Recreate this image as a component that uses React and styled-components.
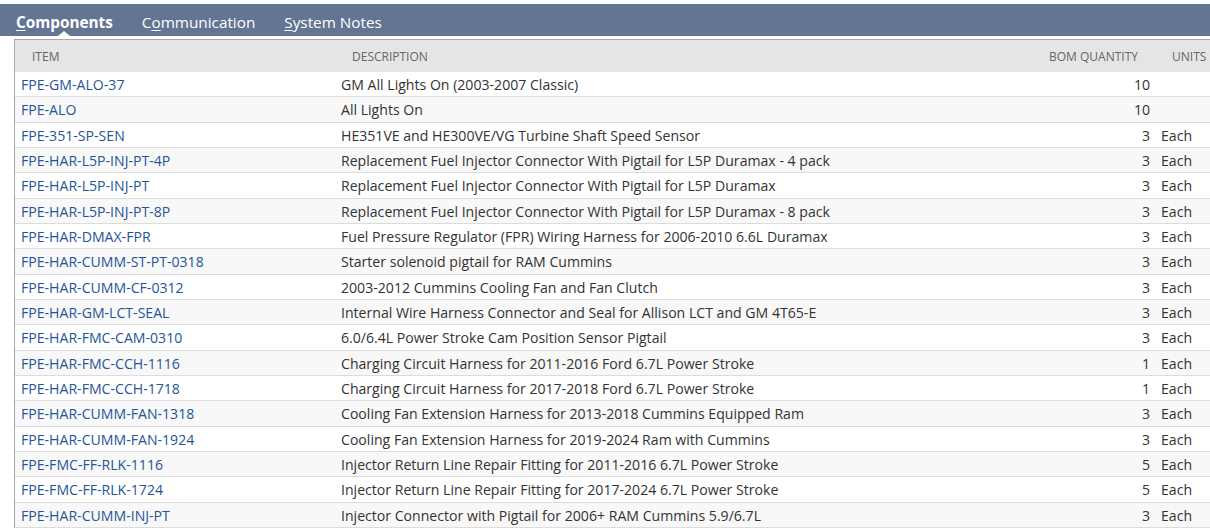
import styled, { createGlobalStyle } from 'styled-components';

const GlobalStyle = createGlobalStyle`
    html, body {
        margin: 0;
        padding: 0;
        background: #ffffff;
        overflow: hidden;
    }
    body {
        font-family: "Open Sans", "Liberation Sans", sans-serif;
    }
`;

const Page = styled.div`
    width: 1210px;
    height: 531px;
    padding-top: 4px;
    box-sizing: border-box;
    overflow: hidden;
`;

const TabBar = styled.div`
    display: flex;
    align-items: stretch;
    height: 32px;
    padding-left: 2px;
    background-color: #637593;
`;

const Tab = styled.div`
    position: relative;
    display: flex;
    align-items: center;
    padding: 3px 14px 0 14px;
    margin-right: 1px;
    color: #ffffff;
    font-size: 15.3px;
    font-weight: ${p => (p.$active ? 700 : 400)};
    white-space: nowrap;

    u {
        text-decoration-thickness: 1px;
        text-underline-offset: 2px;
    }

    &::after {
        content: '';
        display: ${p => (p.$active ? 'block' : 'none')};
        position: absolute;
        left: 50%;
        bottom: 0;
        margin-left: -6px;
        border-left: 6px solid transparent;
        border-right: 6px solid transparent;
        border-bottom: 5px solid #ffffff;
    }
`;

const Table = styled.div`
    margin: 3px 0 0 14px;
    width: 1260px;
    border-left: 1px solid #a9a9a9;
    border-top: 1px solid #a9a9a9;
`;

const Row = styled.div`
    display: grid;
    grid-template-columns: 320px 697px 123px 1fr;
    align-items: center;
    box-sizing: border-box;
    height: ${p => (p.$header ? '32px' : '25.33px')};
    padding-top: ${p => (p.$header ? '0' : '1px')};
    background-color: ${p => (p.$header ? '#e5e5e5' : p.$odd ? '#f8f8f8' : '#ffffff')};
    border-bottom: ${p => (p.$header ? 'none' : '1px solid #dcdcdc')};
`;

const HeadCell = styled.div`
    padding-left: 17px;
    font-size: 12px;
    color: #666666;
    text-transform: uppercase;
    white-space: nowrap;
`;

const Cell = styled.div`
    padding: 0 6px;
    font-size: 14.1px;
    color: #333333;
    white-space: nowrap;
    text-align: ${p => (p.$right ? 'right' : 'left')};
    padding-right: ${p => (p.$right ? '5px' : '6px')};
`;

const ItemLink = styled.a`
    color: #255599;
    text-decoration: none;
`;

const items = [
    ['FPE-GM-ALO-37', 'GM All Lights On (2003-2007 Classic)', '10', ''],
    ['FPE-ALO', 'All Lights On', '10', ''],
    ['FPE-351-SP-SEN', 'HE351VE and HE300VE/VG Turbine Shaft Speed Sensor', '3', 'Each'],
    ['FPE-HAR-L5P-INJ-PT-4P', 'Replacement Fuel Injector Connector With Pigtail for L5P Duramax - 4 pack', '3', 'Each'],
    ['FPE-HAR-L5P-INJ-PT', 'Replacement Fuel Injector Connector With Pigtail for L5P Duramax', '3', 'Each'],
    ['FPE-HAR-L5P-INJ-PT-8P', 'Replacement Fuel Injector Connector With Pigtail for L5P Duramax - 8 pack', '3', 'Each'],
    ['FPE-HAR-DMAX-FPR', 'Fuel Pressure Regulator (FPR) Wiring Harness for 2006-2010 6.6L Duramax', '3', 'Each'],
    ['FPE-HAR-CUMM-ST-PT-0318', 'Starter solenoid pigtail for RAM Cummins', '3', 'Each'],
    ['FPE-HAR-CUMM-CF-0312', '2003-2012 Cummins Cooling Fan and Fan Clutch', '3', 'Each'],
    ['FPE-HAR-GM-LCT-SEAL', 'Internal Wire Harness Connector and Seal for Allison LCT and GM 4T65-E', '3', 'Each'],
    ['FPE-HAR-FMC-CAM-0310', '6.0/6.4L Power Stroke Cam Position Sensor Pigtail', '3', 'Each'],
    ['FPE-HAR-FMC-CCH-1116', 'Charging Circuit Harness for 2011-2016 Ford 6.7L Power Stroke', '1', 'Each'],
    ['FPE-HAR-FMC-CCH-1718', 'Charging Circuit Harness for 2017-2018 Ford 6.7L Power Stroke', '1', 'Each'],
    ['FPE-HAR-CUMM-FAN-1318', 'Cooling Fan Extension Harness for 2013-2018 Cummins Equipped Ram', '3', 'Each'],
    ['FPE-HAR-CUMM-FAN-1924', 'Cooling Fan Extension Harness for 2019-2024 Ram with Cummins', '3', 'Each'],
    ['FPE-FMC-FF-RLK-1116', 'Injector Return Line Repair Fitting for 2011-2016 6.7L Power Stroke', '5', 'Each'],
    ['FPE-FMC-FF-RLK-1724', 'Injector Return Line Repair Fitting for 2017-2024 6.7L Power Stroke', '5', 'Each'],
    ['FPE-HAR-CUMM-INJ-PT', 'Injector Connector with Pigtail for 2006+ RAM Cummins 5.9/6.7L', '3', 'Each'],
];

function App() {
    return (
        <>
            <GlobalStyle />
            <Page>
                <TabBar>
                    <Tab $active><span><u>C</u>omponents</span></Tab>
                    <Tab><span>C<u>o</u>mmunication</span></Tab>
                    <Tab><span><u>S</u>ystem Notes</span></Tab>
                </TabBar>
                <Table>
                    <Row $header>
                        <HeadCell>Item</HeadCell>
                        <HeadCell>Description</HeadCell>
                        <HeadCell>BOM Quantity</HeadCell>
                        <HeadCell>Units</HeadCell>
                    </Row>
                    {items.map(([item, desc, qty, units], i) => (
                        <Row key={item} $odd={i % 2 === 1}>
                            <Cell><ItemLink href="#">{item}</ItemLink></Cell>
                            <Cell>{desc}</Cell>
                            <Cell $right>{qty}</Cell>
                            <Cell>{units}</Cell>
                        </Row>
                    ))}
                </Table>
            </Page>
        </>
    );
}

export default App;
